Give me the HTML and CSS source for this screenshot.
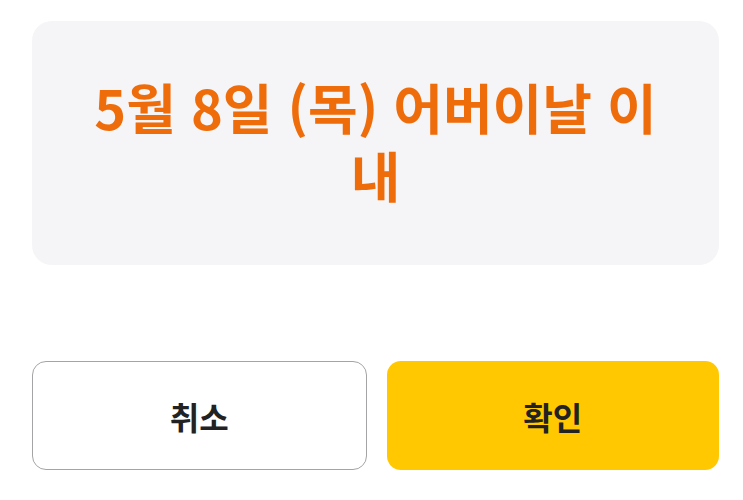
FILE: index.html
```html
<!DOCTYPE html>
<html lang="ko">
<head>
<meta charset="utf-8">
<link rel="stylesheet" href="styles.css">
</head>
<body>
<div class="page">
  <div class="notice">
    <p class="notice-text">5월 8일 (목) 어버이날 이내</p>
  </div>
  <div class="actions">
    <button class="btn btn-cancel">취소</button>
    <button class="btn btn-ok">확인</button>
  </div>
</div>
</body>
</html>
```
FILE: styles.css
```css
* { box-sizing: border-box; }
html, body { margin: 0; padding: 0; background: #ffffff; }
body {
  font-family: "Noto Sans CJK KR", "Noto Sans", sans-serif;
}
.page {
  width: 743px;
  height: 500px;
  padding: 21px 24px 0 32px;
  display: flex;
  flex-direction: column;
}
.notice {
  height: 244px;
  background: #f5f5f7;
  border-radius: 20px;
  display: flex;
  align-items: center;
  justify-content: center;
  padding: 0 55px 4px;
}
.notice-text {
  margin: 0;
  text-align: center;
  color: #ef6c0a;
  font-weight: 700;
  font-size: 54px;
  line-height: 68px;
  word-break: break-all;
}
.actions {
  margin-top: 96px;
  display: flex;
  gap: 20px;
}
.btn {
  flex: 1;
  height: 109px;
  border-radius: 14px;
  font-family: "Noto Sans CJK KR", "Noto Sans", sans-serif;
  font-weight: 700;
  font-size: 32px;
  color: #222222;
  display: flex;
  align-items: center;
  justify-content: center;
}
.btn-cancel {
  background: #ffffff;
  border: 1.5px solid #a4a4a6;
}
.btn-ok {
  background: #ffc800;
  border: none;
}
```
